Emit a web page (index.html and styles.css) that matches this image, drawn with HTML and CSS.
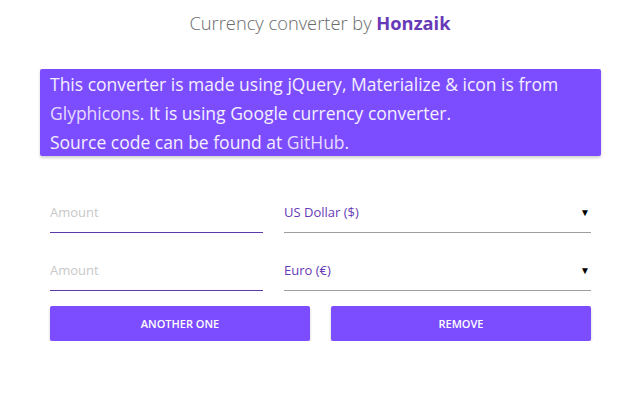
FILE: index.html
```html
<!DOCTYPE html>
<html>
<head>
<meta charset="utf-8">
<link rel="stylesheet" href="styles.css">
</head>
<body>
<div class="container">
  <h1 class="title">Currency converter by <b class="author">Honzaik</b></h1>
  <div class="panel">
    This converter is made using jQuery, Materialize &amp; icon is from <a class="lnk">Glyphicons</a>. It is using Google currency converter.<br>
    Source code can be found at <a class="lnk">GitHub</a>.
  </div>
  <div class="row">
    <div class="field amount"><span class="placeholder">Amount</span></div>
    <div class="field select"><span class="cur">US Dollar ($)</span><span class="arrow">▼</span></div>
  </div>
  <div class="row">
    <div class="field amount"><span class="placeholder">Amount</span></div>
    <div class="field select"><span class="cur">Euro (€)</span><span class="arrow">▼</span></div>
  </div>
  <div class="buttons">
    <button class="btn">ANOTHER ONE</button>
    <button class="btn">REMOVE</button>
  </div>
</div>
</body>
</html>
```
FILE: styles.css
```css
html, body { margin: 0; padding: 0; background: #fff; }
body { font-family: "Open Sans", "Noto Sans", sans-serif; }
.container { width: 561px; margin: 0 0 0 40px; }
.title {
  margin: 0 0 0 -40px;
  width: 640px;
  padding-top: 11px;
  height: 69px;
  box-sizing: border-box;
  text-align: center;
  font-size: 18.3px;
  font-weight: 300;
  color: #6b6b6b;
  line-height: 24px;
}
.author { font-weight: 700; color: #673ab7; }
.panel {
  background: #7c4dff;
  color: #f4efff;
  font-size: 17.5px;
  line-height: 29px;
  padding: 1px 10px 0 10px;
  height: 87px;
  box-sizing: border-box;
  border-radius: 2px;
  box-shadow: 0 2px 3px rgba(0,0,0,0.18);
  margin-bottom: 40px;
}
.lnk { color: #e6dbff; }
.row { display: flex; gap: 21px; padding: 0 10px 0 10px; height: 58px; }
.field { position: relative; height: 37px; box-sizing: border-box; display: flex; align-items: center; padding-bottom: 4px; }
.amount { width: 213px; border-bottom: 1px solid #5a3aa8; }
.select { flex: 1; border-bottom: 1px solid #9e9e9e; justify-content: space-between; }
.placeholder { color: #c8c8c8; font-size: 13px; }
.cur { color: #673ab7; font-size: 13px; }
.arrow { font-size: 10px; color: #000; margin-right: 1px; }
.buttons { display: flex; gap: 21px; padding: 0 10px; margin-top: -6px; }
.btn {
  flex: 1;
  height: 35px;
  border: none;
  border-radius: 2px;
  background: #7c4dff;
  color: #fff;
  font-family: "Open Sans", sans-serif;
  font-size: 11px;
  font-weight: 600;
  box-shadow: 0 2px 3px rgba(0,0,0,0.2);
  padding: 0;
}
```
